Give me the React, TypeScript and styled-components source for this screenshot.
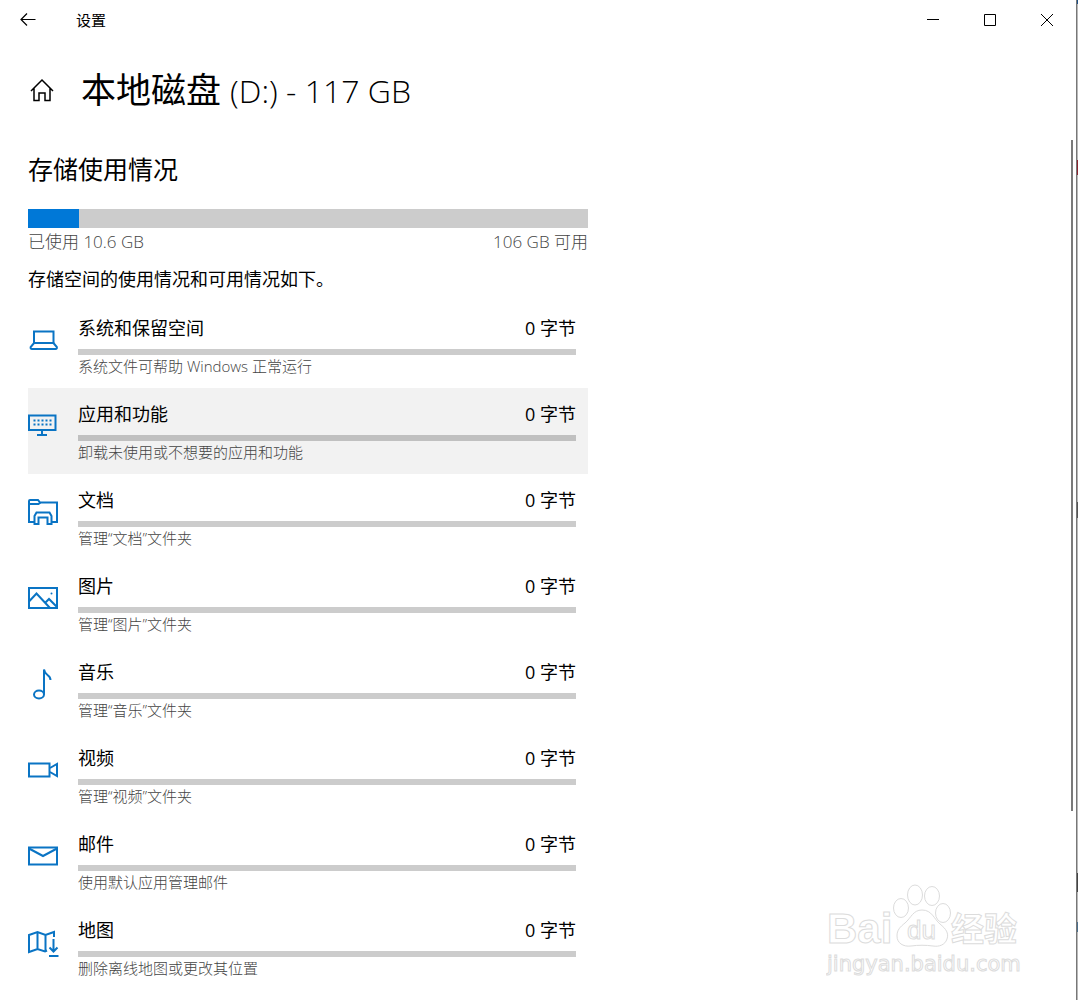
import React from "react";
import styled, { createGlobalStyle } from "styled-components";

const GlobalStyle = createGlobalStyle`
  *, *::before, *::after { box-sizing: border-box; }
  body {
    margin: 0;
    background: #fff;
    color: #000;
    font-family: "Open Sans", "Noto Sans CJK SC", sans-serif;
  }
  h1, h2, p, ul { margin: 0; padding: 0; font-weight: inherit; }
`;

const Desktop = styled.div`
  display: flex;
  height: 100vh;
  overflow: hidden;
  padding-right: 1px;
  background: linear-gradient(
    #1d4f86 0 4px,
    #b8b8b8 4px 160px,
    #8c2430 160px 175px,
    #b8b8b8 175px 502px,
    #555 502px 518px,
    #b8b8b8 518px 873px,
    #444 873px 892px,
    #b8b8b8 892px 922px,
    #4c6f8c 922px 932px,
    #b8b8b8 932px
  );
`;

const Window = styled.div`
  position: relative;
  flex: 1;
  min-width: 0;
  display: flex;
  flex-direction: column;
  background: #fff;
  border-right: 1px solid #777;
`;

const TitleBar = styled.header`
  display: flex;
  align-items: center;
  height: 40px;
  flex: none;
  padding-right: 1px;
`;

const IconButton = styled.button<{ $width: number }>`
  width: ${(p) => p.$width}px;
  height: 40px;
  padding: 0;
  border: 0;
  background: transparent;
  display: flex;
  align-items: center;
  justify-content: center;
  svg { display: block; }
`;

const AppName = styled.span`
  flex: 1;
  padding-left: 20px;
  font-size: 15px;
  line-height: 20px;
`;

const PageHeader = styled.div`
  display: flex;
  align-items: center;
  gap: 26px;
  height: 100px;
  flex: none;
  padding-left: 28px;
`;

const HomeButton = styled(IconButton)`
  height: 30px;
`;

const PageTitle = styled.h1`
  font-size: 35px;
  line-height: 48px;
  white-space: nowrap;
`;

const DriveLabel = styled.span`
  font-size: 32px;
  font-weight: 300;
`;

const Body = styled.div`
  flex: 1;
  min-height: 0;
  display: flex;
`;

const Content = styled.main`
  flex: 1;
  min-width: 0;
  overflow: hidden;
  padding: 12px 28px 0;
`;

const ScrollTrack = styled.div`
  width: 5px;
  flex: none;
`;

const ScrollThumb = styled.div`
  width: 2px;
  height: 78%;
  background: #7a7a7a;
`;

const Column = styled.section`
  max-width: 560px;
`;

const SectionTitle = styled.h2`
  font-size: 25px;
  line-height: 34px;
  margin-bottom: 23px;
`;

const Meter = styled.div`
  height: 19px;
  background: #ccc;
`;

const MeterFill = styled.div`
  height: 100%;
  background: #0078d7;
`;

const Stats = styled.div`
  display: flex;
  justify-content: space-between;
  font-size: 17px;
  font-weight: 300;
  line-height: 28px;
  color: #444;
`;

const Intro = styled.p`
  font-size: 18px;
  line-height: 46px;
`;

const List = styled.ul`
  list-style: none;
`;

const Row = styled.a<{ $active?: boolean }>`
  display: flex;
  gap: 20px;
  height: 86px;
  padding: 13px 12px 0 0;
  color: inherit;
  text-decoration: none;
  background: ${(p) => (p.$active ? "#f2f2f2" : "transparent")};
`;

const RowIcon = styled.svg`
  flex: none;
  width: 30px;
  height: 32px;
  margin-top: 9px;
  overflow: visible;
  fill: none;
  stroke: #0a74c4;
  stroke-width: 2;
`;

const RowBody = styled.div`
  flex: 1;
  min-width: 0;
`;

const RowHead = styled.div`
  display: flex;
  justify-content: space-between;
  font-size: 18px;
  line-height: 26px;
  margin-bottom: 8px;
`;

const RowBar = styled.div<{ $active?: boolean }>`
  height: 6px;
  background: ${(p) => (p.$active ? "#c0c0c0" : "#ccc")};
`;

const RowNote = styled.p`
  font-size: 15px;
  font-weight: 300;
  line-height: 22px;
  color: #444;
`;

const Watermark = styled.svg`
  position: absolute;
  right: 54px;
  bottom: 20px;
  width: 196px;
  height: 98px;
  pointer-events: none;
  fill: #fff;
  stroke: #dcdcdc;
  stroke-width: 1;
  font-family: "Liberation Sans", "Noto Sans CJK SC", sans-serif;
`;

const SiteAddress = styled.text`
  font-family: "DejaVu Sans", sans-serif;
  font-size: 21px;
`;

const items = [
  {
    name: "系统和保留空间",
    note: "系统文件可帮助 Windows 正常运行",
    icon: (
      <>
        <path d="M6 19V7.5h19.5V19" />
        <path d="M6 19h19.5l3.300 4q.5 2-1.300 2h-23.500q-1.800 0-1.300-2z" />
      </>
    ),
  },
  {
    name: "应用和功能",
    note: "卸载未使用或不想要的应用和功能",
    active: true,
    icon: (
      <>
        <path d="M1 5.500h26.500v14.500h-26.500z" />
        <path d="M14 20v5M9 25h10" />
        <path d="M5.500 10.500h18M5.500 14.500h18" strokeDasharray="2 2" />
      </>
    ),
  },
  {
    name: "文档",
    note: "管理“文档”文件夹",
    icon: (
      <>
        <path d="M6 26H1V5q0-1 1-1h8l2 2.500h17V26h-5" />
        <path d="M1 8h9.500l2-1.500" />
        <path d="M6.500 28V20l2-3.500h13l2 3.500v8h-4v-6.500h-9V28z" />
      </>
    ),
  },
  {
    name: "图片",
    note: "管理“图片”文件夹",
    icon: (
      <>
        <path d="M1 6h28v20H1z" />
        <path d="M1 19.500l7.500-8L22 26M17.500 20.500l3.500-3.500 8 8" />
        <circle cx="23.500" cy="11.500" r="1" fill="#0a74c4" stroke="none" />
      </>
    ),
  },
  {
    name: "音乐",
    note: "管理“音乐”文件夹",
    icon: (
      <>
        <ellipse cx="11" cy="26.500" rx="5" ry="4" />
        <path d="M16 26.500V1.500q.5 3.500 3.500 5.500t3 5" />
      </>
    ),
  },
  {
    name: "视频",
    note: "管理“视频”文件夹",
    icon: (
      <>
        <path d="M1 9.500h20.500v13H1z" />
        <path d="M22 14l7-4v12l-7-4" />
      </>
    ),
  },
  {
    name: "邮件",
    note: "使用默认应用管理邮件",
    icon: (
      <>
        <path d="M1 7.500h28v17H1z" />
        <path d="M1 8.500l14 7.500 14-7.500" />
      </>
    ),
  },
  {
    name: "地图",
    note: "删除离线地图或更改其位置",
    icon: (
      <>
        <path d="M19 24.500l-2 1-7.500-2.500L1 26V9l8.500-3 8 3L26 6v5M9.500 6v17M17.500 9v16" />
        <path d="M25.500 13v12M21.500 21.500l4 4 4-4M21 30h9.500" />
      </>
    ),
  },
];

export default function App() {
  return (
    <Desktop>
      <GlobalStyle />
      <Window>
        <TitleBar>
          <IconButton $width={56} aria-label="返回">
            <svg width="16" height="14" viewBox="0 0 16 14" fill="none" stroke="#000" strokeWidth="1.2">
              <path d="M15.500 6.500H1M7 .5l-6 6 6 6" />
            </svg>
          </IconButton>
          <AppName>设置</AppName>
          <IconButton $width={57} aria-label="最小化">
            <svg width="12" height="12" viewBox="0 0 12 12" stroke="#000">
              <path d="M0 5.500h12" />
            </svg>
          </IconButton>
          <IconButton $width={57} aria-label="最大化">
            <svg width="12" height="12" viewBox="0 0 12 12" fill="none" stroke="#000">
              <path d="M.5.5h11v11H.5z" />
            </svg>
          </IconButton>
          <IconButton $width={57} aria-label="关闭">
            <svg width="12" height="12" viewBox="0 0 12 12" stroke="#000">
              <path d="M0 0l12 12M12 0L0 12" />
            </svg>
          </IconButton>
        </TitleBar>

        <PageHeader>
          <HomeButton $width={27} aria-label="主页">
            <svg width="24" height="24" viewBox="0 0 24 24" fill="none" stroke="#000" strokeWidth="1.500">
              <path d="M1 13L12 2l11 11M4 10.500V22.500h5v-7.500h6v7.500h5V10.500" />
            </svg>
          </HomeButton>
          <PageTitle>
            本地磁盘 <DriveLabel>(D:) - 117 GB</DriveLabel>
          </PageTitle>
        </PageHeader>

        <Body>
          <Content>
            <Column>
              <SectionTitle>存储使用情况</SectionTitle>
              <Meter>
                <MeterFill style={{ width: `${(10.6 / 117) * 100}%` }} />
              </Meter>
              <Stats>
                <span>已使用 10.6 GB</span>
                <span>106 GB 可用</span>
              </Stats>
              <Intro>存储空间的使用情况和可用情况如下。</Intro>
              <List>
                {items.map((item) => (
                  <li key={item.name}>
                    <Row href="#" $active={item.active}>
                      <RowIcon viewBox="0 0 30 32" aria-hidden="true">
                        {item.icon}
                      </RowIcon>
                      <RowBody>
                        <RowHead>
                          <span>{item.name}</span>
                          <span>0 字节</span>
                        </RowHead>
                        <RowBar $active={item.active} />
                        <RowNote>{item.note}</RowNote>
                      </RowBody>
                    </Row>
                  </li>
                ))}
              </List>
            </Column>
          </Content>
          <ScrollTrack>
            <ScrollThumb />
          </ScrollTrack>
        </Body>

        <Watermark viewBox="0 0 196 98" aria-hidden="true">
          <text x="1" y="61" fontSize="42" fontWeight="700">Bai</text>
          <ellipse cx="75" cy="26" rx="7.500" ry="9.500" />
          <ellipse cx="89" cy="13" rx="7.500" ry="10" />
          <ellipse cx="106" cy="14" rx="7.500" ry="9.500" />
          <ellipse cx="117" cy="31" rx="7.500" ry="9.500" />
          <path d="M96 28c10 0 12 9 18 14 6 5 9 9 7 15-2 6-8 8-14 7-7-1-15-1-22 0-8 1-14-3-14-10 0-6 3-9 8-13 6-5 8-13 17-13z" />
          <text x="81" y="57" fontSize="26">du</text>
          <text x="125" y="59" fontSize="33" fontWeight="700">经验</text>
          <SiteAddress x="1" y="89">jingyan.baidu.com</SiteAddress>
        </Watermark>
      </Window>
    </Desktop>
  );
}
